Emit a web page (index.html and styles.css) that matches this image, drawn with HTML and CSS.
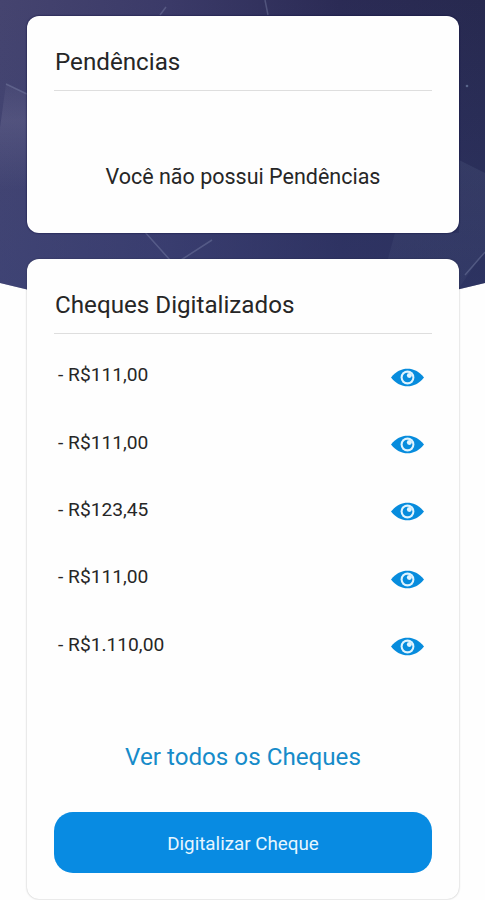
FILE: index.html
```html
<!DOCTYPE html>
<html lang="pt-BR">
<head>
<meta charset="utf-8">
<title>Cheques</title>
<link rel="stylesheet" href="styles.css">
</head>
<body>
<svg class="backdrop" viewBox="0 0 485 320" aria-hidden="true">
  <defs>
    <linearGradient id="night" x1="0" y1="0" x2="1" y2="0">
      <stop offset="0" stop-color="#45446f"/>
      <stop offset=".35" stop-color="#3b3a68"/>
      <stop offset=".7" stop-color="#2b2b55"/>
      <stop offset="1" stop-color="#27294f"/>
    </linearGradient>
    <linearGradient id="glow" x1="0" y1="0" x2="0" y2="1">
      <stop offset="0" stop-color="#35427c" stop-opacity="0"/>
      <stop offset="1" stop-color="#35427c" stop-opacity=".45"/>
    </linearGradient>
    <linearGradient id="haze" x1="0" y1="0" x2="0" y2="1">
      <stop offset="0" stop-color="#77769b" stop-opacity=".1"/>
      <stop offset=".35" stop-color="#77769b" stop-opacity=".3"/>
      <stop offset="1" stop-color="#77769b" stop-opacity="0"/>
    </linearGradient>
    <linearGradient id="mist" x1="0" y1="0" x2="0" y2="1">
      <stop offset="0" stop-color="#59658a" stop-opacity=".22"/>
      <stop offset="1" stop-color="#59658a" stop-opacity=".12"/>
    </linearGradient>
    <clipPath id="curve"><path d="M0 0H485V283Q242 345 0 283Z"/></clipPath>
  </defs>
  <g clip-path="url(#curve)">
    <rect width="485" height="320" fill="url(#night)"/>
    <rect width="485" height="320" fill="url(#glow)"/>
    <path d="M6 84L27 94V190H0V128Z" fill="url(#haze)"/>
    <path d="M459 160L485 173V250L459 288H380L395 233H459Z" fill="url(#mist)"/>
    <path d="M6 84L27 94M160 15L166 7M265 0L268 15M144 231L170 260M181 260L212 240M465 275L485 252" fill="none" stroke="#8d96b8" stroke-opacity=".35" stroke-width="1.5"/>
    <circle cx="467" cy="86" r="1.3" fill="#59658a"/>
  </g>
</svg>
<svg class="symbols" aria-hidden="true">
  <symbol id="eye" viewBox="0 0 32 18">
    <path d="M0 9C5 3 10 .5 16 .5S27 3 32 9C27 15 22 17.5 16 17.5S5 15 0 9Z" fill="#078cdd"/>
    <circle cx="16" cy="9" r="6.7" fill="#e0f4fe"/>
    <circle cx="16" cy="9" r="4.7" fill="#078cdd"/>
    <circle cx="17.8" cy="7" r="2.4" fill="#e0f4fe"/>
  </symbol>
</svg>
<main class="page">
  <section class="card pending">
    <h2 class="title">Pendências</h2>
    <p class="empty">Você não possui Pendências</p>
  </section>
  <section class="card checks">
    <h2 class="title">Cheques Digitalizados</h2>
    <ul class="list">
      <li class="item"><span>- R$111,00</span><svg class="eye"><use href="#eye"/></svg></li>
      <li class="item"><span>- R$111,00</span><svg class="eye"><use href="#eye"/></svg></li>
      <li class="item"><span>- R$123,45</span><svg class="eye"><use href="#eye"/></svg></li>
      <li class="item"><span>- R$111,00</span><svg class="eye"><use href="#eye"/></svg></li>
      <li class="item"><span>- R$1.110,00</span><svg class="eye"><use href="#eye"/></svg></li>
    </ul>
    <a class="all">Ver todos os Cheques</a>
    <button class="scan">Digitalizar Cheque</button>
  </section>
</main>
</body>
</html>
```
FILE: styles.css
```css
* { box-sizing: border-box; }
body {
  margin: 0;
  height: 900px;
  overflow: hidden;
  background: #fefefe;
  color: #262626;
  font-family: Roboto, "Liberation Sans", sans-serif;
}
.backdrop { position: absolute; top: 0; left: 0; width: 485px; height: 320px; }
.symbols { position: absolute; width: 0; height: 0; }
.page {
  position: relative;
  display: flex;
  flex-direction: column;
  gap: 26px;
  padding: 16px 26px 0 27px;
}
.card {
  display: flex;
  flex-direction: column;
  padding: 0 27px;
  border-radius: 12px;
  background: #fefefe;
}
.pending { height: 217px; box-shadow: 0 0 2px #080838; }
.checks { height: 640px; box-shadow: 0 0 2px rgba(0, 0, 0, .3); }
.title {
  flex: none;
  height: 75px;
  margin: 0;
  padding-left: 1px;
  border-bottom: 1px solid #dedede;
  font-size: 24.2px;
  font-weight: 400;
  line-height: 92px;
  white-space: nowrap;
}
.empty {
  margin: 71px 0 0;
  font-size: 21.5px;
  line-height: 30px;
  text-align: center;
  white-space: nowrap;
}
.list { margin: 7px 0 0; padding: 0 8px 0 4px; list-style: none; }
.item {
  display: flex;
  align-items: center;
  justify-content: space-between;
  height: 67.4px;
  font-size: 19.2px;
}
.eye { width: 33px; height: 19px; margin-top: 5px; }
.all {
  margin-top: 64px;
  color: #168bc9;
  font-size: 24.2px;
  line-height: 30px;
  text-align: center;
  white-space: nowrap;
}
.scan {
  height: 61px;
  margin-top: 40px;
  border: 0;
  border-radius: 19px;
  background: #088be2;
  color: #e6f6ff;
  font: 400 18.8px/61px Roboto, "Liberation Sans", sans-serif;
  padding: 2px 0 0;
}
```
